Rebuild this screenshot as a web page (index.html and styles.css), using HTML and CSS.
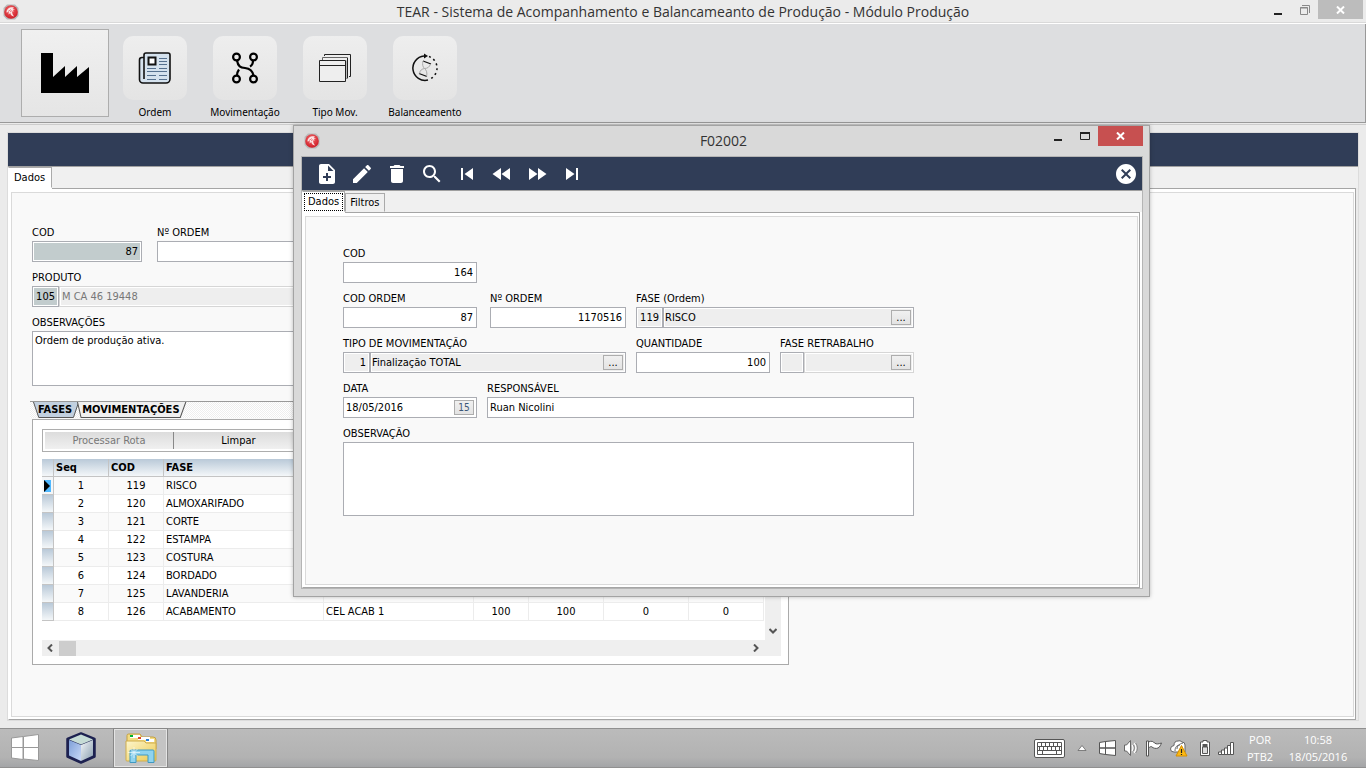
FILE: index.html
```html
<!DOCTYPE html>
<html lang="pt-BR">
<head>
<meta charset="utf-8">
<title>TEAR - Módulo Produção</title>
<link rel="stylesheet" href="styles.css">
</head>
<body>
<svg class="defs" aria-hidden="true">
  <defs>
    <radialGradient id="red" cx="45%" cy="35%" r="65%"><stop offset="0" stop-color="#f26a6c"/><stop offset="1" stop-color="#cf1c26"/></radialGradient>
    <linearGradient id="cubeL" x2="1" y2="1"><stop offset="0" stop-color="#7e9fd8"/><stop offset="1" stop-color="#c9d9f8"/></linearGradient>
    <linearGradient id="cubeR" x2="1" y2="1"><stop offset="0" stop-color="#f3f6f8"/><stop offset="1" stop-color="#8a9fb0"/></linearGradient>
    <linearGradient id="folder" x2="1" y2="1"><stop offset="0" stop-color="#fdf6cd"/><stop offset="1" stop-color="#ecc94f"/></linearGradient>
    <symbol id="logo" viewBox="0 0 16 16">
      <path d="M4 .5h8L15.500 4v8L12 15.500H4L.5 12V4z" fill="#b9b9b9"/>
      <circle cx="8" cy="8" r="6.800" fill="url(#red)"/>
      <path d="M3.500 8.500C3.500 5 6.500 2.800 11 3.500L9.500 4.500l2.500.7-2.500.8 1.500 1.200L9 7.500l.5 2.500 1.500 2.500C8.500 12 7.500 11 7.300 9L5.500 10.500 5.800 8z" fill="#fff" opacity=".85"/>
      <path d="M5 7.500l3-2M7 8l2-1.500" stroke="#e0555a" stroke-width=".7"/>
    </symbol>
  </defs>
</svg>

<header class="titlebar">
  <svg class="logo"><use href="#logo"/></svg>
  <h1 class="caption">TEAR - Sistema de Acompanhamento e Balancameanto de Produção - Módulo Produção</h1>
  <div class="controls">
    <button class="ctl" aria-label="Minimizar"><svg width="10" height="12"><path d="M1 10h8" stroke="#222" stroke-width="2"/></svg></button>
    <button class="ctl" aria-label="Restaurar"><svg width="10" height="12"><path d="M2 1.500h7.500V9M.5 3.500h7v7h-7zM0 4h8" stroke="#888" fill="none"/></svg></button>
    <button class="ctl ctl-close" aria-label="Fechar"><svg width="9" height="8"><path d="M1 .5l7 7M8 .5l-7 7" stroke="#fff" stroke-width="2"/></svg></button>
  </div>
</header>

<nav class="ribbon">
  <button class="home" aria-label="Produção"><svg width="48" height="40" viewBox="0 0 48 40"><path d="M0 0h12v24L24 13v11L36 13v11L48 14v26H0z"/></svg></button>
  <button class="tool"><span class="tile"><svg width="34" height="34" viewBox="0 0 34 34" fill="none" stroke="#111" stroke-width="1.600"><path d="M6 6.500H4a2.500 2.500 0 0 0-2.500 2.500v19.500A3.500 3.500 0 0 0 5 32h23a4 4 0 0 0 4-4V4a2 2 0 0 0-2-2H8a2 2 0 0 0-2 2v24" fill="#d5e2ee"/><path d="M10.500 6.500h7v7h-7z" stroke-width="2" fill="#fff"/><path d="M21 7.500h8M21 10.500h8M21 13.500h8M9 17.500h9M21 17.500h8M9 20.500h20M9 24.500h9M21 24.500h8M9 28.500h9M21 28.500h8" stroke="#56718f" stroke-width="1"/></svg></span><span>Ordem</span></button>
  <button class="tool"><span class="tile"><svg width="28" height="34" viewBox="0 0 28 34" fill="none" stroke="#000" stroke-width="2.200"><circle cx="5.500" cy="6" r="3.400"/><circle cx="22.500" cy="6" r="3.400"/><circle cx="5.500" cy="28" r="3.400"/><circle cx="22.500" cy="28" r="3.400"/><path d="M6 9.500c1 6 3.500 7 8 7.500s7.500 2 8.500 7.500M22 9.500c0 3-1 5-3 6M6 24.500c0-3 .5-4 2-6"/></svg></span><span>Movimentação</span></button>
  <button class="tool"><span class="tile"><svg width="34" height="30" viewBox="0 0 34 30" fill="#eee" stroke="#222"><path d="M6.500 3V1.500h26v22H31" /><path d="M4.500 7V4.500h25v21H28" stroke="#666"/><path d="M27.500 7.500h2v18h-2z" fill="#bbb" stroke="none"/><path d="M1.500 7.500h26v21h-26z"/><path d="M1.500 12.500h26M29.500 25V5"/></svg></span><span>Tipo Mov.</span></button>
  <button class="tool"><span class="tile"><svg width="30" height="30" viewBox="0 0 30 30" fill="none" stroke="#111" stroke-width="1.500"><path d="M14 3a12.200 12.200 0 1 0 4 24"/><path d="M19 3.500a12.200 12.200 0 0 1 2 22" stroke-dasharray="2 3"/><path d="M14 .5l4 2.500-4 2.500z" fill="#111" stroke="none"/><path d="M13 8l8 3M9 20.500l8 3" stroke-width="1.300"/><path d="M13 8c-1 4 0 6 1.500 7.500C12 16 10 17 9.500 20.500M20.500 11c-1 3-3 4.500-6 4.500 2 1.500 3 4.500 2 8" stroke="#aaa" stroke-width="1"/></svg></span><span>Balanceamento</span></button>
</nav>

<main class="workspace">
  <div class="frame">
    <div class="band"></div>
    <div class="tabs"><button class="tab tab-on">Dados</button></div>
    <div class="page"><form class="sheet">
      <div class="row">
        <div class="field w110"><label for="cod">COD</label><input class="in num key" id="cod" value="87"></div>
        <div class="field w170 shift"><label for="nord">Nº ORDEM</label><input class="in num" id="nord"></div>
      </div>
      <div class="field"><label for="prod">PRODUTO</label>
        <div class="pair"><input class="in num key code" id="prod" value="105"><input class="in off faint grow" aria-label="Descrição do produto" value="M CA 46 19448" readonly></div>
      </div>
      <div class="field"><label for="obs">OBSERVAÇÕES</label><textarea class="in memo-s" id="obs">Ordem de produção ativa.</textarea></div>

      <div class="strip">
        <button type="button" class="slant slant-on"><svg viewBox="0 0 48 16" preserveAspectRatio="none"><path d="M.5 0L6 15.500h36L47.500 0" fill="#c2d0df" stroke="#555"/></svg><span>FASES</span></button>
        <button type="button" class="slant"><svg viewBox="0 0 108 16" preserveAspectRatio="none"><path d="M.5 0L4 15.500h98L107.500 0" fill="#f0f0f0" stroke="#555"/></svg><span>MOVIMENTAÇÕES</span></button>
      </div>
      <section class="group">
        <div class="actions"><button type="button" disabled>Processar Rota</button><button type="button">Limpar</button></div>
        <div class="grid">
          <div class="gridview">
          <table>
            <colgroup><col class="c12"><col class="c55"><col class="c55"><col class="c160"><col class="c150"><col class="c55"><col class="c75"><col class="c85"><col class="c75"></colgroup>
            <thead><tr><th></th><th>Seq</th><th>COD</th><th>FASE</th><th></th><th></th><th></th><th></th><th></th></tr></thead>
            <tbody>
              <tr class="sel"><th><svg width="7" height="12"><path d="M0 0h7v12H0z" fill="#4fb8ff"/><path d="M0 0l6 6-6 6z"/></svg></th><td>1</td><td>119</td><td>RISCO</td><td></td><td></td><td></td><td></td><td></td></tr>
              <tr><th></th><td>2</td><td>120</td><td>ALMOXARIFADO</td><td></td><td></td><td></td><td></td><td></td></tr>
              <tr><th></th><td>3</td><td>121</td><td>CORTE</td><td></td><td></td><td></td><td></td><td></td></tr>
              <tr><th></th><td>4</td><td>122</td><td>ESTAMPA</td><td></td><td></td><td></td><td></td><td></td></tr>
              <tr><th></th><td>5</td><td>123</td><td>COSTURA</td><td></td><td></td><td></td><td></td><td></td></tr>
              <tr><th></th><td>6</td><td>124</td><td>BORDADO</td><td></td><td></td><td></td><td></td><td></td></tr>
              <tr><th></th><td>7</td><td>125</td><td>LAVANDERIA</td><td></td><td></td><td></td><td></td><td></td></tr>
              <tr><th></th><td>8</td><td>126</td><td>ACABAMENTO</td><td>CEL ACAB 1</td><td>100</td><td>100</td><td>0</td><td>0</td></tr>
            </tbody>
          </table>
          </div>
          <div class="vbar"><svg width="8" height="6"><path d="M.5 1L4 4.500 7.500 1" fill="none" stroke="#555" stroke-width="2"/></svg></div>
          <div class="hbar"><svg width="6" height="8"><path d="M5 .5L1.500 4 5 7.500" fill="none" stroke="#555" stroke-width="2"/></svg><span class="thumb"></span><svg width="6" height="8"><path d="M1 .5L4.500 4 1 7.500" fill="none" stroke="#555" stroke-width="2"/></svg></div>
        </div>
      </section>
    </form></div>
  </div>
</main>

<footer class="taskbar">
  <button class="start" aria-label="Iniciar"><svg width="28" height="28" viewBox="0 0 28 28" fill="#fff" stroke="#999"><path d="M.5 4L12 2.500v11H.5zM12.500 2.500L27.500.5v13h-15zM.5 13.500H12v12L.5 24zM12.500 13.500h15v13l-15-1.500z"/></svg></button>
  <button class="app" aria-label="VirtualBox"><svg width="32" height="32" viewBox="0 0 32 32"><path d="M16 1.500L29.500 7v17.500L16 30.500 2.500 24.500V7z" fill="#1d2150" stroke="#1d2150" stroke-width="2.500" stroke-linejoin="round"/><path d="M16 2.500L28 7.500 16 12.500 4 7.500z" fill="#c6dcd6"/><path d="M4 8l12 5v16L4 23.500z" fill="url(#cubeL)"/><path d="M28 8l-12 5v16l12-5.500z" fill="url(#cubeR)"/></svg></button>
  <button class="app app-on" aria-label="Explorador de Arquivos"><svg width="32" height="30" viewBox="0 0 32 30"><path d="M2 6V2.500Q2 1 3.500 1H15l2 3h11q3 0 3 3v9H2z" fill="#f3dc83" stroke="#c4a042"/><path d="M5 2h10v3H5zM13 4h12v3H13zM21 6h8v3h-8z" fill="#fff"/><path d="M5 2h3v2H5z" fill="#00b430"/><path d="M13 4h3v2h-3z" fill="#d8442a"/><path d="M21 6h3v2h-3z" fill="#2a7fd8"/><path d="M1 8h18l2 2h10v17q0 1-1 1H2q-1 0-1-1z" fill="url(#folder)" stroke="#d0ad4d"/><path d="M5 29.500V18q0-1 1-1h22q1 0 1 1v11.500h-6V22H11v7.500z" fill="#8fd3ee" stroke="#3f99c2"/><path d="M9 14v11M3 19.500h12M5.500 16l7 7M12.500 16l-7 7" stroke="#fff" stroke-width=".8" opacity=".75"/></svg></button>
  <div class="tray">
    <svg class="t1" width="31" height="19" viewBox="0 0 31 19"><rect x=".5" y=".5" width="30" height="18" rx="1.500" fill="#fff" stroke="#555"/><path d="M3.500 3.500h24v12h-24zM3 7.500h25M3 11.500h25M7.500 4v4M11.500 4v4M15.500 4v4M19.500 4v4M23.500 4v4M5.500 8v4M9.500 8v4M13.500 8v4M17.500 8v4M21.500 8v4M25.500 8v4M8.500 12v4M22.500 12v4" fill="none" stroke="#555"/></svg>
    <svg class="t2" width="10" height="6"><path d="M5 .5L9 5.500H1z" fill="#fff" stroke="#666" stroke-width=".8"/></svg>
    <svg class="t3" width="17" height="16" viewBox="0 0 17 16" fill="#fff" stroke="#555"><path d="M.5 2.500L6.500 1.500v6.500h-6zM6.500 1.500l10-1V8h-10zM.5 8h6v6.500l-6-1zM6.500 8h10v7.500l-10-1z"/></svg>
    <svg class="t4" width="14" height="16" viewBox="0 0 14 16" fill="#fff" stroke="#666"><path d="M.5 5h2l4-4.500v15L2.500 11h-2z"/><path d="M8.500 5q1.500 3 0 6M10.500 3q3.500 5 0 10" fill="none" stroke="#fff" stroke-width="2"/><path d="M9.500 5q1.500 3 0 6M11.500 3q3.500 5 0 10" fill="none" stroke-width=".8"/></svg>
    <svg class="t5" width="17" height="17" viewBox="0 0 17 17" fill="#fff" stroke="#555"><path d="M.5 1h2v15h-2zM2.500 2c3-1.500 5-.5 6 1 2 1.500 4 1 7 0-1 2-1.500 4-3.500 5s-5 0-6-1-2 0-3.500 1z"/></svg>
    <svg class="t6" width="18" height="17" viewBox="0 0 18 17"><path d="M4 12Q.5 12 .5 9T4 5.500Q4 1 8 1q2-1 4 1 3 0 3 3v7z" fill="#fff" stroke="#666"/><path d="M5 11c0-4 2-6 5-6M7 9c0-3 2-5 6-6" stroke="#666" fill="none"/><path d="M11.500 5.500L17 16H6z" fill="#fbb914" stroke="#d58e00"/><path d="M11.500 9v4M11.500 14v1" stroke="#222" stroke-width="1.200"/></svg>
    <svg class="t7" width="10" height="16" viewBox="0 0 10 16"><path d="M3 .5h4V2h2.500v13.500h-9V2H3z" fill="#fff" stroke="#555"/><path d="M2.500 4h5v3h-5z" fill="#555"/><path d="M2.500 7h5v6.500h-5z" fill="#ddd" stroke="#555"/></svg>
    <svg class="t8" width="17" height="13" viewBox="0 0 17 13" fill="#fff" stroke="#555"><path d="M.5 10h3v2.500h-3zM3.500 8h3v4.500h-3zM6.500 6h3v6.500h-3zM9.500 3.500h3v9h-3zM12.500.5h3v12h-3z"/></svg>
    <div class="lang">POR<br>PTB2</div>
    <div class="clock">10:58<br>18/05/2016</div>
  </div>
</footer>

<section class="dialog" role="dialog" aria-labelledby="dlg-title">
  <header class="dlg-title">
    <svg class="logo"><use href="#logo"/></svg>
    <h2 class="caption" id="dlg-title">F02002</h2>
    <div class="controls">
      <button class="ctl" aria-label="Minimizar"><svg width="10" height="12"><path d="M1 10h8" stroke="#222" stroke-width="2"/></svg></button>
      <button class="ctl" aria-label="Maximizar"><svg width="10" height="8"><path d="M.5 1v6.500h9V1" stroke="#222" fill="none"/><path d="M0 1h10" stroke="#222" stroke-width="2"/></svg></button>
      <button class="ctl ctl-close" aria-label="Fechar"><svg width="9" height="8"><path d="M1 .5l7 7M8 .5l-7 7" stroke="#fff" stroke-width="2"/></svg></button>
    </div>
  </header>
  <div class="client">
    <div class="band">
      <button class="ico" aria-label="Novo"><svg viewBox="0 0 24 24"><path d="M14 2H6c-1.100 0-1.990.9-1.990 2L4 20c0 1.100.89 2 1.990 2H18c1.100 0 2-.9 2-2V8l-6-6zm2 14h-3v3h-2v-3H8v-2h3v-3h2v3h3v2zm-3-7V3.500L18.500 9H13z"/></svg></button>
      <button class="ico" aria-label="Editar"><svg viewBox="0 0 24 24"><path d="M3 17.250V21h3.750L17.810 9.940l-3.750-3.750L3 17.250zM20.710 7.040c.39-.39.39-1.020 0-1.410l-2.340-2.340c-.39-.39-1.020-.39-1.410 0l-1.830 1.830 3.750 3.750 1.830-1.830z"/></svg></button>
      <button class="ico" aria-label="Excluir"><svg viewBox="0 0 24 24"><path d="M6 19c0 1.100.9 2 2 2h8c1.100 0 2-.9 2-2V7H6v12zM19 4h-3.500l-1-1h-5l-1 1H5v2h14V4z"/></svg></button>
      <button class="ico" aria-label="Pesquisar"><svg viewBox="0 0 24 24"><path d="M15.500 14h-.79l-.28-.27C15.410 12.590 16 11.110 16 9.500 16 5.910 13.090 3 9.500 3S3 5.910 3 9.500 5.910 16 9.500 16c1.610 0 3.090-.59 4.230-1.570l.27.28v.79l5 4.990L20.490 19l-4.990-5zm-6 0C7.010 14 5 11.990 5 9.500S7.010 5 9.500 5 14 7.010 14 9.500 11.990 14 9.500 14z"/></svg></button>
      <button class="ico" aria-label="Primeiro"><svg viewBox="0 0 24 24"><path d="M6 6h2v12H6zm3.500 6l8.500 6V6z"/></svg></button>
      <button class="ico" aria-label="Anterior"><svg viewBox="0 0 24 24"><path d="M11 18V6l-8.500 6 8.500 6zm.5-6l8.500 6V6l-8.500 6z"/></svg></button>
      <button class="ico" aria-label="Próximo"><svg viewBox="0 0 24 24"><path d="M4 18l8.500-6L4 6v12zm9-12v12l8.500-6L13 6z"/></svg></button>
      <button class="ico" aria-label="Último"><svg viewBox="0 0 24 24"><path d="M6 18l8.500-6L6 6v12zM16 6v12h2V6h-2z"/></svg></button>
      <button class="ico ico-end" aria-label="Sair"><svg viewBox="0 0 24 24"><path d="M12 2C6.470 2 2 6.470 2 12s4.470 10 10 10 10-4.470 10-10S17.530 2 12 2zm5 13.590L15.590 17 12 13.410 8.410 17 7 15.590 10.590 12 7 8.410 8.410 7 12 10.590 15.590 7 17 8.410 13.410 12 17 15.590z"/></svg></button>
    </div>
    <div class="tabs dlg-tabs"><button class="tab tab-on"><span class="focus">Dados</span></button><button class="tab tab-back">Filtros</button></div>
    <div class="page"><form class="sheet dlg-sheet">
      <div class="row"><div class="field w134"><label for="d1">COD</label><input class="in num" id="d1" value="164"></div></div>
      <div class="row">
        <div class="field w134"><label for="d2">COD ORDEM</label><input class="in num" id="d2" value="87"></div>
        <div class="field w139"><label for="d3">Nº ORDEM</label><input class="in num" id="d3" value="1170516"></div>
        <div class="field grow"><label for="d4">FASE (Ordem)</label><div class="pair"><input class="in num off code" id="d4" value="119" readonly><div class="in look"><input aria-label="Nome da fase" value="RISCO" readonly><button type="button" class="dots">...</button></div></div></div>
      </div>
      <div class="row">
        <div class="field w283"><label for="d5">TIPO DE MOVIMENTAÇÃO</label><div class="pair"><input class="in num off code" id="d5" value="1" readonly><div class="in look"><input aria-label="Nome do tipo" value="Finalização TOTAL" readonly><button type="button" class="dots">...</button></div></div></div>
        <div class="field w134"><label for="d6">QUANTIDADE</label><input class="in num" id="d6" value="100"></div>
        <div class="field grow"><label for="d7">FASE RETRABALHO</label><div class="pair"><input class="in num off code code-s" id="d7" readonly><div class="in look faint"><input aria-label="Nome da fase de retrabalho" readonly><button type="button" class="dots">...</button></div></div></div>
      </div>
      <div class="row">
        <div class="field w134"><label for="d8">DATA</label><div class="in look date"><input id="d8" value="18/05/2016"><button type="button" class="dots">15</button></div></div>
        <div class="field grow"><label for="d9">RESPONSÁVEL</label><input class="in" id="d9" value="Ruan Nicolini"></div>
      </div>
      <div class="field"><label for="d10">OBSERVAÇÃO</label><textarea class="in memo-l" id="d10"></textarea></div>
    </form></div>
  </div>
</section>
</body>
</html>
```
FILE: styles.css
```css
* { box-sizing: border-box; }
body {
  margin: 0;
  height: 100vh;
  display: flex;
  flex-direction: column;
  overflow: hidden;
  background: #ebebeb;
  color: #000;
  font: 11px/16px "DejaVu Sans Condensed", "DejaVu Sans", sans-serif;
}
button, input, textarea { font: inherit; color: inherit; margin: 0; border-radius: 0; }
button { padding: 0; border: 0; background: none; }
svg { display: block; flex: none; }
.defs { position: absolute; width: 0; height: 0; }

/* window captions */
.titlebar, .dlg-title {
  display: grid;
  grid-template-columns: 1fr auto 1fr;
  flex: none;
}
.titlebar { height: 24px; padding: 0 3px 0 3px; border-bottom: 1px solid #fff; box-shadow: inset 0 -1px #d9d9d9; }
.logo { width: 16px; height: 16px; margin-top: 4px; }
.caption { margin: 0; font: 14px/23px "Open Sans", sans-serif; color: #333; }
.controls { display: flex; justify-content: flex-end; align-items: flex-start; }
.ctl { width: 27px; height: 20px; display: flex; align-items: center; justify-content: center; }
.ctl-close { width: 45px; height: 19px; background: #bcbcbc; }

/* ribbon */
.ribbon {
  flex: none;
  display: flex;
  height: 99px;
  padding: 5px 20px 0;
  background: #dddee0;
  border: 1px solid #999;
  border-width: 0 1px 1px 0;
}
.home {
  width: 88px;
  height: 88px;
  margin: 0 1px;
  display: flex;
  align-items: center;
  justify-content: center;
  border: 1px solid #adadad;
  background: linear-gradient(#f0f0f0, #e5e5e5);
}
.tool {
  width: 90px;
  padding-top: 7px;
  display: flex;
  flex-direction: column;
  align-items: center;
  gap: 4px;
  font: 10px/16px "Noto Sans", sans-serif;
}
.tile {
  width: 64px;
  height: 64px;
  display: flex;
  align-items: center;
  justify-content: center;
  border-radius: 10px;
  background: linear-gradient(#eee, #e4e4e4);
}

/* workspace */
.workspace {
  flex: 1;
  min-height: 0;
  display: flex;
  margin-top: 1px;
  padding: 7px;
  border-top: 1px solid #ccc;
}
.frame { flex: 1; display: flex; flex-direction: column; border: 1px solid #dcdcdc; }
.band {
  flex: none;
  display: flex;
  align-items: center;
  height: 34px;
  background: #303d57;
  border-bottom: 1px solid #a0a0a0;
}
.tabs { position: relative; flex: none; display: flex; align-items: flex-end; height: 21px; background: #f0f0f0; }
.tab { height: 21px; padding: 0 6px 0 5px; border: 1px solid #aaa; border-bottom-color: transparent; }
.tab-on { background: #fff; border-left-color: #fff; box-shadow: 0 1px #fff; }
.page {
  flex: 1;
  min-height: 0;
  display: flex;
  padding: 3px 1px 2px 2px;
  background: #fff;
  border: 1px solid #a5a5a5;
  border-left-color: #fff;
  margin-right: 2px;
}
.sheet {
  flex: 1;
  display: flex;
  flex-direction: column;
  align-items: flex-start;
  gap: 6px;
  padding: 30px 20px 0;
  background: #f9f9f9;
  border: 1px solid #dadada;
}
.sheet > .field { width: 757px; }
.row { display: flex; gap: 10px; }
.field { display: flex; flex-direction: column; }
.field label { padding-top: 2px; line-height: 16px; white-space: nowrap; }
.in {
  min-width: 0;
  height: 21px;
  padding: 0 3px 1px 2px;
  border: 1px solid #abadb3;
  background: #fff;
  outline: 0;
}
.num { text-align: right; }
.key { background: #c2cccd; box-shadow: inset 0 0 0 1px #fff; }
.off { background: #eee; box-shadow: inset 0 0 0 1px #fff; }
.faint { border-color: #d6d6d6; color: #777; }
.pair { display: flex; }
.code { width: 27px; flex: none; }
.code-s { width: 24px; }
.grow { flex: 1; min-width: 0; }
.look { flex: 1; display: flex; align-items: center; padding: 0 2px 0 1px; background: #eee; box-shadow: inset 0 0 0 1px #fff; }
.look input { flex: 1; min-width: 0; height: 19px; padding: 0 0 1px; border: 0; background: none; outline: 0; }
.date { flex: none; padding-left: 2px; background: #fff; }
.dots { flex: none; width: 20px; height: 15px; border: 1px solid #adadad; background: linear-gradient(#f0f0f0, #e3e3e3); color: #000; line-height: 12px; }
.date .dots { color: #3d5878; font-size: 10px; }
.w110 { width: 110px; }
.w134 { width: 134px; flex: none; }
.w139 { width: 139px; flex: none; padding-left: 3px; }
.w170 { width: 170px; }
.w283 { width: 283px; flex: none; }
.shift { margin-left: 5px; }
textarea.in { resize: none; display: block; padding: 1px 2px; }
.memo-s { height: 55px; }
.memo-l { height: 74px; }

/* lower tab strip and phases grid */
.strip {
  display: flex;
  width: 759px;
  height: 17px;
  margin: 9px 0 0 -2px;
  padding-left: 3px;
  border-top: 1px solid #999;
  background: repeating-conic-gradient(#fff 0 25%, #eee 0 50%) 0 0 / 2px 2px;
}
.slant { position: relative; height: 16px; padding: 0 7px 0 5px; font-weight: bold; line-height: 16px; }
.slant + .slant { margin-left: -2px; }
.slant svg { position: absolute; inset: 0; width: 100%; height: 16px; }
.slant span { position: relative; }
.group {
  width: 757px;
  margin-top: -5px;
  padding: 9px 7px 8px 9px;
  border: 1px solid #aaa;
  background: #fff;
}
.actions {
  display: flex;
  height: 23px;
  padding: 2px;
  border: 1px solid #adadad;
  background: linear-gradient(#dcdcdc, #f0f0f0) content-box;
}
.actions button { width: 129px; }
.actions button:disabled { color: #777; border-right: 1px solid #888; }
.grid { display: grid; grid-template-columns: 1fr 16px; grid-template-rows: 181px 16px; margin-top: 7px; }
.gridview { overflow: hidden; }
table { table-layout: fixed; width: 722px; border-collapse: separate; border-spacing: 0; }
.c12 { width: 12px; } .c55 { width: 55px; } .c75 { width: 75px; } .c85 { width: 85px; } .c150 { width: 150px; } .c160 { width: 160px; }
th, td { height: 18px; padding: 1px 2px 0; line-height: 16px; text-align: center; border: 1px solid #ececec; border-width: 0 1px 1px 0; white-space: nowrap; }
th { text-align: left; background: linear-gradient(#b9c9d8, #f4f7f9); border-color: #c4c4c4; }
td:nth-child(4), td:nth-child(5) { text-align: left; }
tbody tr:nth-child(odd) td { background: #fafafa; }
tbody .sel td { background: #e4eaf1; }
.sel th { background: #f4f6f8; }
.vbar, .hbar { background: #efefef; display: flex; }
.vbar { align-items: flex-end; justify-content: center; padding-bottom: 6px; }
.hbar { grid-column: 1 / 3; align-items: center; padding: 0 22px 0 5px; }
.thumb { width: 17px; height: 15px; margin: 0 auto 0 6px; background: #cdcdcd; }

/* taskbar */
.taskbar {
  flex: none;
  display: flex;
  height: 40px;
  border: 1px solid #909090;
  border-width: 1px 0;
  background: linear-gradient(#bbb, #b2b2b2 75%, #a4a5a7);
}
.start, .app { display: flex; align-items: center; justify-content: center; }
.start { width: 50px; }
.app { width: 61px; }
.app-on { width: 53px; margin-left: 3px; border: 1px solid #e4e4e4; outline: 1px solid #888; background: #c4c4c4; }
.tray { margin-left: auto; display: flex; align-items: center; color: #fff; font: 11px/17px "Open Sans", sans-serif; text-align: center; }
.t1 { margin-right: 12px; }
.t2 { margin-right: 12px; }
.t3, .t4 { margin-right: 8px; }
.t5 { margin-right: 7px; }
.t6 { margin-right: 12px; }
.t7 { margin-right: 8px; }
.lang { width: 50px; }
.clock { width: 66px; margin-right: 15px; }

/* movement dialog */
.dialog {
  position: absolute;
  left: 293px;
  top: 125px;
  width: 857px;
  display: flex;
  flex-direction: column;
  padding: 0 6px 7px 7px;
  border: 1px solid #a3a3a3;
  background: #d9d9d9;
  box-shadow: 0 0 4px rgba(0, 0, 0, .25);
}
.dlg-title { height: 30px; padding-left: 3px; }
.dlg-title .caption { line-height: 30px; }
.dlg-title .logo { margin-top: 7px; }
.dlg-title .ctl-close { height: 20px; background: #c75050; }
.client { display: flex; flex-direction: column; border: 1px solid #b5b5b5; background: #fff; }
.client .band { padding: 0 4px 0 7px; }
.ico { width: 35px; height: 24px; display: flex; align-items: center; justify-content: center; }
.ico svg { width: 24px; height: 24px; fill: #fff; }
.ico-end { width: 24px; margin-left: auto; }
.dlg-tabs .tab-on { padding: 0 1px; }
.focus { display: block; padding: 0 3px; border: 1px dotted #000; }
.dlg-tabs .tab-back { height: 19px; padding: 0 4px; background: #f0f0f0; }
.dlg-sheet { padding: 27px 37px 68px; }
.dlg-sheet > .row, .dlg-sheet > .field { width: 571px; }
```
